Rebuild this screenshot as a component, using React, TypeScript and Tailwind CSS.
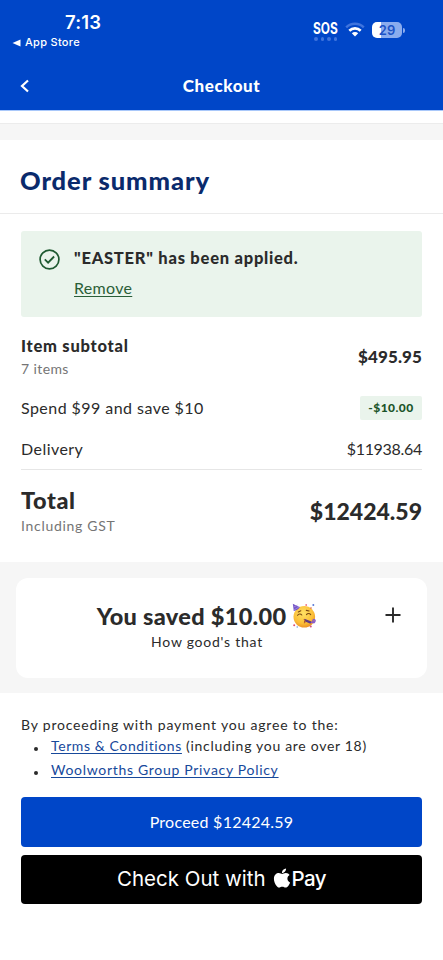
import React from 'react'
import { FaApple } from 'react-icons/fa'

type RowProps = {
  label: string
  children: React.ReactNode
}

const StatusBar = () => {
  return (
    <div className="flex h-[60px] justify-between font-['Inter',sans-serif] text-white">
      <div className="pl-3 pt-[11px]">
        <div className="pl-[53px] text-[18.5px] font-semibold leading-[23px] tracking-[0.2px]">
          7:13
        </div>
        <div className="flex items-center text-[11px] font-medium leading-[17px] tracking-[0.3px]">
          <svg width="9" height="8" viewBox="0 0 9 8" className="mr-1">
            <path d="M8.5 0.5v7L0.5 4z" fill="#fff" />
          </svg>
          App Store
        </div>
      </div>
      <div className="flex items-start pr-[38px] pt-[20px]">
        <div className="w-[25px]">
          <div className="ml-[-1px] origin-left scale-x-[0.77] text-[15.5px] font-bold leading-[17px]">
            SOS
          </div>
          <div className="flex gap-[3px]">
            <i className="h-[3.5px] w-[3.5px] rounded-full bg-[#3f74dd]" />
            <i className="h-[3.5px] w-[3.5px] rounded-full bg-[#3f74dd]" />
            <i className="h-[3.5px] w-[3.5px] rounded-full bg-[#3f74dd]" />
            <i className="h-[3.5px] w-[3.5px] rounded-full bg-[#3f74dd]" />
          </div>
        </div>
        <svg width="20" height="15" viewBox="0 0 20 15" className="ml-[6px] mt-[2px]">
          <path
            d="M1.2 5.4a12.6 12.6 0 0 1 17.6 0"
            fill="none"
            stroke="#3f74dd"
            strokeWidth="2.4"
          />
          <path
            d="M4.3 8.7a8.2 8.2 0 0 1 11.4 0"
            fill="none"
            stroke="#fff"
            strokeWidth="2.6"
          />
          <path d="M10 14.6l-3.2-3.3a4.5 4.5 0 0 1 6.4 0z" fill="#fff" />
        </svg>
        <div className="ml-[7px] mt-[2px] flex items-center">
          <div className="flex h-4 w-[30px] items-center justify-center rounded-[5px] bg-linear-to-r from-white from-29% to-[#8aacee] to-29% text-[13px] font-semibold leading-4 text-[#1b53c6]">
            29
          </div>
          <div className="ml-[1px] h-[5px] w-[2px] rounded-r-full bg-[#8aacee]" />
        </div>
      </div>
    </div>
  )
}

const PartyFace = () => {
  return (
    <svg width="25" height="26" viewBox="0 0 25 26" className="mb-[2px] ml-[6px]">
      <defs>
        <radialGradient id="face" cx="0.45" cy="0.35" r="0.65">
          <stop offset="0" stopColor="#ffe165" />
          <stop offset="0.7" stopColor="#fbbf37" />
          <stop offset="1" stopColor="#ec9327" />
        </radialGradient>
      </defs>
      <circle cx="12.3" cy="13.8" r="10.8" fill="url(#face)" />
      <path d="M0.8 0.8l7 3.4c-1.5 2.3-3.4 3.4-6 3.8z" fill="#7457c4" />
      <path d="M1.4 4.2l4-2M1.7 7.2l5.6-3.5" stroke="#a48be8" strokeWidth="0.8" />
      <path
        d="M5.6 12.3c1-1.6 3.2-1.7 4.2-.3M14.5 11.6c1-1.6 3.2-1.5 4.2 0M6.3 8.9l2.5-1.2M14.3 7.4l2.8.6"
        fill="none"
        stroke="#7c4a13"
        strokeWidth="1.1"
        strokeLinecap="round"
      />
      <path d="M12.5 15.8l7 2.6-1 2.4-5.4-2.2z" fill="#5c3a86" />
      <path
        d="M11.8 16.6c1.6-.2 1.8 1.2.4 1.8 1.4.2 1 1.7-.3 1.5"
        fill="none"
        stroke="#a5452a"
        strokeWidth="1"
      />
      <path
        d="M19 19c1 .9 2.2.2 1.9-.9s.8-2.1 1.8-1.3-.2 2.8-1.6 3"
        fill="none"
        stroke="#8659c9"
        strokeWidth="1.5"
      />
      <circle cx="14.2" cy="2" r="0.9" fill="#ef7183" />
      <circle cx="21.3" cy="1.9" r="1" fill="#5a7bd8" />
      <circle cx="19" cy="5" r="0.8" fill="#dd5b42" />
      <circle cx="2.2" cy="22.3" r="1" fill="#df4d71" />
      <circle cx="5.2" cy="24" r="0.7" fill="#5b8bdf" />
      <circle cx="18.8" cy="23.4" r="1" fill="#d64e83" />
    </svg>
  )
}

const SummaryRow = ({ label, children }: RowProps) => {
  return (
    <div className="flex items-center justify-between text-base leading-6 tracking-[0.45px]">
      <span>{label}</span>
      {children}
    </div>
  )
}

const App = () => {
  return (
    <div className="min-h-[960px] w-full bg-white font-['Lato',sans-serif] text-[#2b2b2b]">
      <header className="h-[111px] border-b border-[#a9c8fa] bg-[#0046c8]">
        <StatusBar />
        <div className="grid h-[51px] grid-cols-3 items-center px-5 text-white">
          <svg width="10" height="14" viewBox="0 0 10 14">
            <path d="M8 1.5L2 7l6 5.5" fill="none" stroke="#fff" strokeWidth="2.2" />
          </svg>
          <h1 className="text-center text-[17px] font-black tracking-[0.6px]">
            Checkout
          </h1>
        </div>
      </header>

      <div className="mt-3 h-[17px] border-t border-[#ececec] bg-[#f6f6f6]" />

      <h2 className="h-[74px] border-b border-[#ebebeb] px-5 pt-6 text-[25.5px] font-black leading-8 tracking-[0.9px] text-[#0a2a6c]">
        Order summary
      </h2>

      <section className="px-[21px] pt-[17px]">
        <div className="flex h-[86px] rounded-[3px] bg-[#eaf4ec] pl-[18px] pt-4">
          <svg width="21" height="21" viewBox="0 0 21 21" className="mt-[2px]">
            <circle cx="10.5" cy="10.5" r="9.4" fill="none" stroke="#1f5a31" strokeWidth="1.7" />
            <path d="M5.8 10.4l3.3 3.3 6-6.2" fill="none" stroke="#1f5a31" strokeWidth="1.8" />
          </svg>
          <div className="ml-[14px]">
            <p className="text-[16.5px] font-black leading-[23px] tracking-[0.75px]">
              "EASTER" has been applied.
            </p>
            <a className="mt-[6px] block text-base leading-6 tracking-[0.3px] text-[#2a5e38] underline underline-offset-2">
              Remove
            </a>
          </div>
        </div>

        <div className="mt-[17px] flex items-center justify-between">
          <div>
            <p className="text-[16.5px] font-black leading-6 tracking-[0.75px]">
              Item subtotal
            </p>
            <p className="text-sm leading-[22px] tracking-[0.4px] text-[#757575]">
              7 items
            </p>
          </div>
          <span className="text-[17px] font-black tracking-[0.1px]">$495.95</span>
        </div>

        <div className="mt-4">
          <SummaryRow label="Spend $99 and save $10">
            <span className="flex h-6 w-[62px] items-center justify-center rounded-[2px] bg-[#eaf4ec] text-[12px] font-black text-[#1b5529]">
              -$10.00
            </span>
          </SummaryRow>
        </div>
        <div className="mt-[17px] border-b border-[#e6e6e6] pb-2">
          <SummaryRow label="Delivery">
            <span className="tracking-[-0.3px]">$11938.64</span>
          </SummaryRow>
        </div>

        <div className="flex h-[92px] items-start justify-between pt-[15px]">
          <div>
            <p className="text-[23.5px] font-black leading-[30px] tracking-[0.6px]">
              Total
            </p>
            <p className="mt-[1px] text-sm leading-5 tracking-[0.7px] text-[#757575]">
              Including GST
            </p>
          </div>
          <span className="mt-[11px] text-[23px] font-black leading-[30px]">
            $12424.59
          </span>
        </div>
      </section>

      <section className="h-[131px] bg-[#f6f6f6] px-4 pt-4">
        <div className="grid h-[100px] grid-cols-[60px_1fr_79px] rounded-xl bg-white pt-6">
          <span />
          <div className="ml-[-10px] text-center">
            <p className="flex items-center justify-center whitespace-nowrap text-[23.5px] font-black leading-[29px] tracking-[0.3px]">
              You saved $10.00
              <PartyFace />
            </p>
            <p className="text-sm leading-[22px] tracking-[0.75px]">
              How good's that
            </p>
          </div>
          <svg width="16" height="16" viewBox="0 0 16 16" className="ml-[37px] mt-[5px]">
            <path d="M8 0.5v15M0.5 8h15" stroke="#2b2b2b" strokeWidth="1.9" />
          </svg>
        </div>
      </section>

      <section className="px-[21px] pt-[21px] text-sm tracking-[0.6px]">
        <p className="leading-[21px] tracking-[0.8px]">
          By proceeding with payment you agree to the:
        </p>
        <ul>
          <li className="flex h-[22px] items-center">
            <span className="ml-[13px] mr-[13px] mt-[5px] h-1 w-1 rounded-full bg-[#2b2b2b]" />
            <span>
              <a className="text-[#17499b] underline underline-offset-2">
                Terms & Conditions
              </a>{' '}
              <span className="tracking-[0.7px]">(including you are over 18)</span>
            </span>
          </li>
          <li className="mt-[2px] flex h-[22px] items-center">
            <span className="ml-[13px] mr-[13px] mt-[5px] h-1 w-1 rounded-full bg-[#2b2b2b]" />
            <a className="tracking-[0.7px] text-[#17499b] underline underline-offset-2">
              Woolworths Group Privacy Policy
            </a>
          </li>
        </ul>

        <button className="mt-4 block h-[50px] w-full rounded bg-[#0046c8] text-base tracking-[0.25px] text-white">
          Proceed $12424.59
        </button>
        <button className="mt-2 flex h-[49px] w-full items-center justify-center rounded bg-black pb-[2px] font-['Inter',sans-serif] text-[20.5px] tracking-normal text-white">
          Check Out with
          <FaApple className="mb-[2px] ml-[5px]" size={22} />
          <span className="ml-[-1px] font-medium tracking-[-0.6px]">Pay</span>
        </button>
      </section>
    </div>
  )
}

export default App
